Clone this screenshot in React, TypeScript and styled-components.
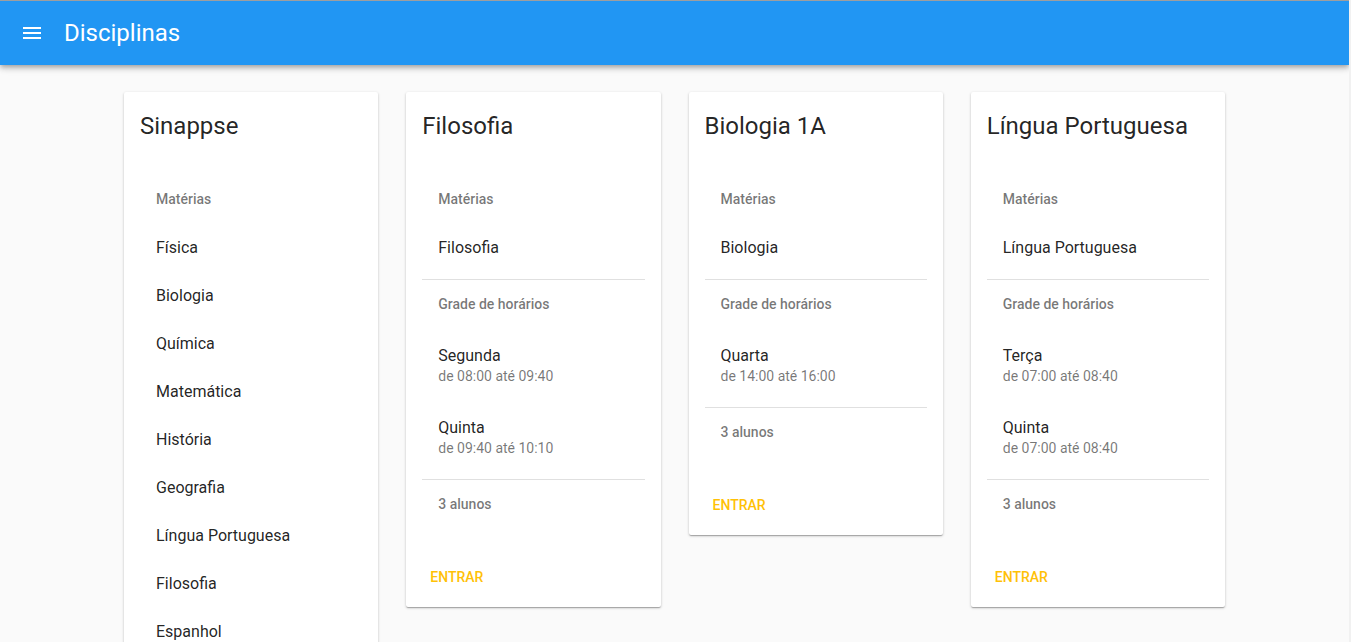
import React from "react";
import styled, { createGlobalStyle } from "styled-components";

const Global = createGlobalStyle`
  html { background: #f1f1f1; }
  body {
    margin: 0;
    width: calc(100% - 2px);
    border-top: 1px solid #9e9e9e;
    background: #fafafa;
    font-family: Roboto, "Liberation Sans", Arial, sans-serif;
    color: rgba(0,0,0,0.87);
    -webkit-font-smoothing: antialiased;
  }
  * { box-sizing: border-box; }
`;

const AppBar = styled.header`
  height: 64px;
  background: #2196f3;
  color: #fff;
  display: flex;
  align-items: center;
  padding: 0 24px;
  box-shadow: 0 2px 4px -1px rgba(0,0,0,0.2), 0 4px 5px 0 rgba(0,0,0,0.14), 0 1px 10px 0 rgba(0,0,0,0.12);
  position: relative;
  z-index: 1;
`;

const MenuButton = styled.button`
  width: 48px;
  height: 48px;
  margin-left: -16px;
  margin-right: 8px;
  border: 0;
  background: transparent;
  color: #fff;
  display: flex;
  align-items: center;
  justify-content: center;
  padding: 0;
`;

const BarTitle = styled.h1`
  margin: 0;
  font-size: 24px;
  font-weight: 400;
  line-height: 32px;
`;

const Main = styled.main`
  width: 1101px;
  margin: 0 auto;
  padding-top: 27px;
  display: grid;
  grid-template-columns: repeat(4, 1fr);
  column-gap: 28px;
  align-items: start;
`;

const Card = styled.section`
  background: #fff;
  border-radius: 2px;
  box-shadow: 0 1px 3px 0 rgba(0,0,0,0.2), 0 1px 1px 0 rgba(0,0,0,0.14), 0 2px 1px -1px rgba(0,0,0,0.12);
  display: flex;
  flex-direction: column;
`;

const Content = styled.div`
  padding: 18px 16px 0;
`;

const CardTitle = styled.h2`
  margin: 0 0 33px;
  font-size: 24px;
  font-weight: 400;
  line-height: 32px;
  color: rgba(0,0,0,0.87);
`;

const List = styled.ul<{ $pb?: number }>`
  list-style: none;
  margin: 0;
  padding: 0 0 ${(p) => (p.$pb ?? 8)}px;
`;

const Subheader = styled.li`
  height: 48px;
  line-height: 48px;
  padding: 0 16px;
  font-size: 14px;
  font-weight: 500;
  color: rgba(0,0,0,0.54);
`;

const Item = styled.li`
  height: 48px;
  display: flex;
  align-items: center;
  padding: 0 16px;
  font-size: 16px;
  color: rgba(0,0,0,0.87);
`;

const TwoLineItem = styled.li`
  height: 72px;
  padding: 16px 16px 0;
  display: flex;
  flex-direction: column;
`;

const Primary = styled.span`
  font-size: 16px;
  line-height: 24px;
  color: rgba(0,0,0,0.87);
`;

const Secondary = styled.span`
  font-size: 14px;
  line-height: 16px;
  color: rgba(0,0,0,0.54);
`;

const Divider = styled.hr`
  margin: 0;
  border: 0;
  height: 1px;
  background: rgba(0,0,0,0.12);
`;

const Actions = styled.div`
  padding: 31px 8px 12px;
  display: flex;
`;

const Button = styled.button`
  height: 36px;
  min-width: 64px;
  padding: 0 16px;
  border: 0;
  background: transparent;
  font-family: inherit;
  font-size: 14px;
  font-weight: 500;
  text-transform: uppercase;
  color: #ffc107;
  border-radius: 2px;
  cursor: pointer;
`;

const MenuIcon = () => (
  <svg width="24" height="24" viewBox="0 0 24 24" fill="currentColor">
    <path d="M3 18h18v-2H3v2zm0-5h18v-2H3v2zm0-7v2h18V6H3z" />
  </svg>
);

type Slot = { day: string; time: string };
type Course = { title: string; subject: string; slots: Slot[]; students: number };

const courses: Course[] = [
  {
    title: "Filosofia",
    subject: "Filosofia",
    slots: [
      { day: "Segunda", time: "de 08:00 até 09:40" },
      { day: "Quinta", time: "de 09:40 até 10:10" },
    ],
    students: 3,
  },
  {
    title: "Biologia 1A",
    subject: "Biologia",
    slots: [{ day: "Quarta", time: "de 14:00 até 16:00" }],
    students: 3,
  },
  {
    title: "Língua Portuguesa",
    subject: "Língua Portuguesa",
    slots: [
      { day: "Terça", time: "de 07:00 até 08:40" },
      { day: "Quinta", time: "de 07:00 até 08:40" },
    ],
    students: 3,
  },
];

const subjects = [
  "Física",
  "Biologia",
  "Química",
  "Matemática",
  "História",
  "Geografia",
  "Língua Portuguesa",
  "Filosofia",
  "Espanhol",
];

export default function App() {
  return (
    <>
      <Global />
      <AppBar>
        <MenuButton aria-label="menu">
          <MenuIcon />
        </MenuButton>
        <BarTitle>Disciplinas</BarTitle>
      </AppBar>
      <Main>
        <Card>
          <Content>
            <CardTitle>Sinappse</CardTitle>
            <List>
              <Subheader>Matérias</Subheader>
              {subjects.map((s) => (
                <Item key={s}>{s}</Item>
              ))}
            </List>
          </Content>
        </Card>
        {courses.map((c) => (
          <Card key={c.title}>
            <Content>
              <CardTitle>{c.title}</CardTitle>
              <List>
                <Subheader>Matérias</Subheader>
                <Item>{c.subject}</Item>
              </List>
              <Divider />
              <List $pb={7}>
                <Subheader>Grade de horários</Subheader>
                {c.slots.map((s, i) => (
                  <TwoLineItem key={i}>
                    <Primary>{s.day}</Primary>
                    <Secondary>{s.time}</Secondary>
                  </TwoLineItem>
                ))}
              </List>
              <Divider />
              <List $pb={0}>
                <Subheader>{c.students} alunos</Subheader>
              </List>
            </Content>
            <Actions>
              <Button>Entrar</Button>
            </Actions>
          </Card>
        ))}
      </Main>
    </>
  );
}
